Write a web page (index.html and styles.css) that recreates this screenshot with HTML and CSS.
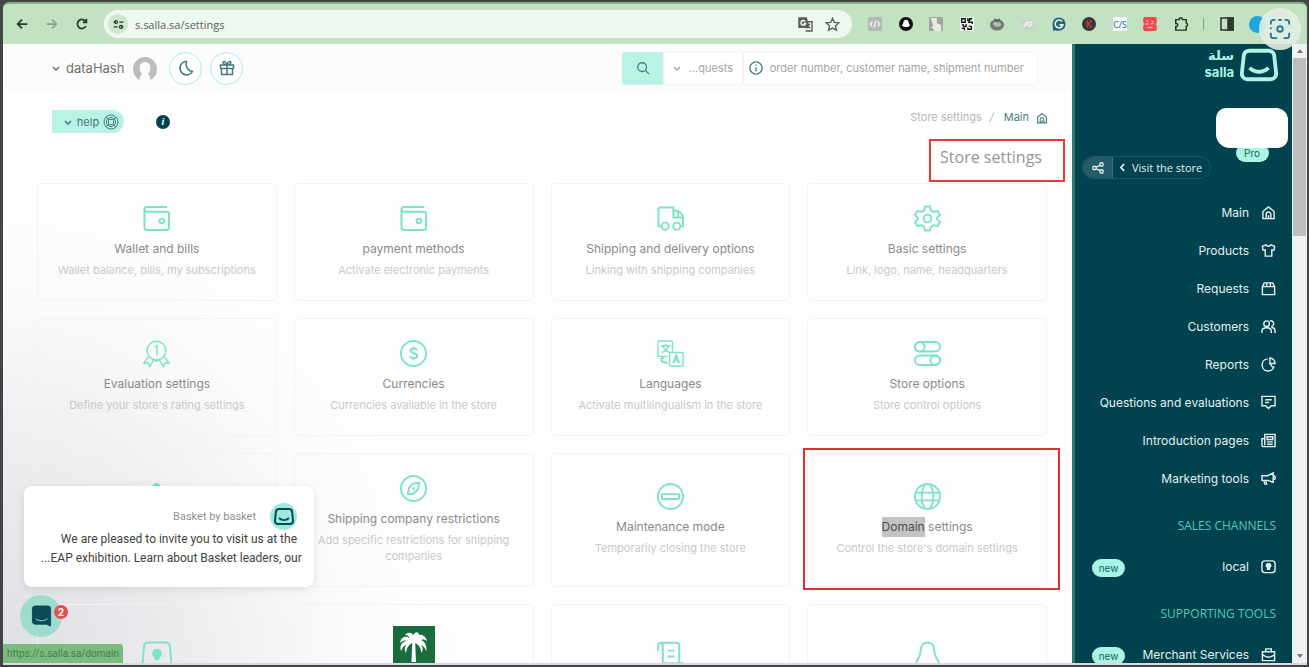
FILE: index.html
```html
<!DOCTYPE html>
<html lang="en">
<head>
    <meta charset="UTF-8">
    <meta name="viewport" content="width=device-width, initial-scale=1.0">
    <title>Store settings</title>
    <link rel="stylesheet" href="styles.css">
</head>
<body>
    <svg class="sprite" aria-hidden="true">
        <symbol id="chevron" viewBox="0 0 10 10"><path d="M2 4l3 3 3-3"/></symbol>
        <symbol id="house" viewBox="0 0 16 16"><path d="M2 7l6-5 6 5v7.500H2zM5.500 14.500V10a2.500 2.500 0 0 1 5 0v4.500M8 14.500V11"/></symbol>
        <symbol id="wallet" viewBox="0 0 28 28"><path d="M25 2H4a2.500 2.500 0 0 0-2.500 2.500V23a3 3 0 0 0 3 3H24a3 3 0 0 0 3-3V9a2 2 0 0 0-2-2H4a2.500 2.500 0 0 1-2.500-2.500"/><circle cx="19.500" cy="16.500" r="2.400"/></symbol>
        <symbol id="basket" viewBox="0 0 40 34"><path d="M10 2h20c4 0 5.500 2 6 5l2 18c.4 4-2 7-6 7H8c-4 0-6.400-3-6-7L4 7c.5-3 2-5 6-5z"/><path d="M10 20c6 5.500 14 5.500 20 0"/></symbol>
    </svg>
    <div class="browser">
        <button aria-label="Back"><svg viewBox="0 0 16 16"><path d="M14 8H3M8 3L3 8l5 5"/></svg></button>
        <button class="off" aria-label="Forward"><svg viewBox="0 0 16 16"><path d="M2 8h11M8 3l5 5-5 5"/></svg></button>
        <button aria-label="Reload"><svg viewBox="0 0 16 16"><path d="M12.500 10.500a5.200 5.200 0 1 1 0-5M13 2v4H9"/></svg></button>
        <div class="address">
            <span class="site-icon"><svg viewBox="0 0 16 16"><path d="M2 5h3M9 5h5M2 11h5M11 11h3"/><circle cx="5" cy="5" r="1.800"/><circle cx="11" cy="11" r="1.800"/></svg></span>
            <input type="text" aria-label="Address" value="s.salla.sa/settings">
            <svg viewBox="0 0 16 16"><path class="fill" d="M1 1h8l2 10H1z"/><path d="M7 5h8v10H8M9 8h4M11 7v1c0 2-1 3-2 4M10 9l3 3"/><path class="white" d="M7.500 4.500A2.500 2.500 0 1 0 8 7H6"/></svg>
            <svg viewBox="0 0 16 16"><path d="M8 1.500l2 4.300 4.700.5-3.500 3.200 1 4.600L8 11.800l-4.200 2.300 1-4.600L1.300 6.300 6 5.800z"/></svg>
        </div>
        <div class="extensions">
            <svg viewBox="0 0 16 16"><rect width="16" height="16" rx="2" fill="#b3b9b3"/><path d="M5 5L2.500 8 5 11M11 5l2.500 3-2.500 3M9 4l-2 8" stroke="#f1f5f1"/></svg>
            <svg viewBox="0 0 16 16"><circle cx="8" cy="8" r="8" fill="#111"/><path fill="#fff" d="M8 3c2 0 3 1.500 3 3.500L12.500 10 10 11.500H6L3.500 10 5 6.500C5 4.500 6 3 8 3z"/></svg>
            <svg viewBox="0 0 16 16"><rect width="16" height="16" rx="1" fill="#9ea69e"/><path fill="#e4e9e4" d="M2 1h7v6l5 2v7H6l-3-5 2-1z"/></svg>
            <svg viewBox="0 0 16 16"><rect width="16" height="16" fill="#eef5ee"/><path d="M2 2h4v4H2zM9 1v3h2V2h3M9 6h5v2M2 9h2v2h3V8M10 10l3 1v3H9v-2M2 13h3v2" stroke="#111"/></svg>
            <svg viewBox="0 0 16 16"><ellipse cx="8" cy="9" rx="8" ry="6.500" fill="#747b74"/><path fill="#b4bab4" d="M3 7c3-2 8-2 10 1-1 4-7 5-10-1z"/><path d="M5 2l3 3 3-3" stroke="#566056"/></svg>
            <svg viewBox="0 0 16 16"><rect y="3" width="16" height="11" rx="3" fill="#ccd3cc"/><path d="M3 12l4-7M7 10l2-4c3-2 5 1 2 4H9" stroke="#f5f8f5"/></svg>
            <svg viewBox="0 0 16 16"><circle cx="8" cy="8" r="7.500" fill="#27637c"/><path fill="#27637c" d="M1 8h7v7.500H1z"/><path d="M11.500 5A4.500 4.500 0 1 0 12.500 9H8.500" stroke="#e9f7ee" stroke-width="1.800"/></svg>
            <svg viewBox="0 0 16 16"><circle cx="8" cy="8" r="8" fill="#32383c"/><path d="M6 4v8M11 4L7 8l4 4" stroke="#c4383d" stroke-width="2"/></svg>
            <svg viewBox="0 0 16 16"><rect width="16" height="16" fill="#eff7fa"/><text x="8" y="12" text-anchor="middle">C/S</text></svg>
            <svg viewBox="0 0 16 16"><path fill="#ef4a4d" d="M1 0h14l1 4-1 4 1 4-1 4H1l-1-4 1-4-1-4z"/><path d="M4 4l2 1M10 4l2 2M3 8h3M9 8l3-1M5 12h6" stroke="#fab0ab"/></svg>
            <svg viewBox="0 0 16 16"><path d="M2 3h4c-.5-3 4-3 3.500 0H14v4c2 0 2 3.500 0 3.500V15H2v-4c3 .5 3-4 0-3.500z" stroke="#26341f" stroke-width="1.700"/></svg>
        </div>
        <span class="line"></span>
        <svg class="panel" viewBox="0 0 16 16"><rect x="2" y="2" width="12" height="12"/><path class="fill" d="M9 2h5v12H9z"/></svg>
        <span class="profile"></span>
        <button class="lens" aria-label="Capture"><svg viewBox="0 0 24 24"><path d="M2 7V5a3 3 0 0 1 3-3h2M10 2h4M17 2h2a3 3 0 0 1 3 3v2M22 16v3a3 3 0 0 1-3 3h-3M9 22H5a3 3 0 0 1-3-3v-3M2 10v2"/><circle cx="12" cy="12" r="3"/></svg></button>
    </div>

    <div class="page">
        <main>
            <header>
                <button class="user"><svg><use href="#chevron"/></svg>dataHash
                    <svg class="avatar" viewBox="0 0 24 24"><path d="M7 24c-1-3 1-5 2-6C5 14 6 6 12 6s7 8 3 12c1 1 3 3 2 6a12 12 0 1 0-10 0z"/></svg>
                </button>
                <button class="round" aria-label="Dark mode"><svg viewBox="0 0 16 16"><path d="M8.500 1.500a6.700 6.700 0 1 0 6 10A7.500 7.500 0 0 1 8.500 1.500z"/></svg></button>
                <button class="round" aria-label="Gifts"><svg viewBox="0 0 16 16"><path d="M1.500 5h13v3.500h-13zM2.500 8.500V14.500h11V8.500M8 5v9.500M8 5C4 5 3 1 5.500 1.500 7 1.800 8 5 8 5s1-3.200 2.500-3.500C13 1 12 5 8 5z"/></svg></button>
                <form class="search">
                    <button aria-label="Search"><svg viewBox="0 0 16 16"><circle cx="7" cy="7" r="5"/><path d="M11 11l4 4"/></svg></button>
                    <div class="kind">
                        <svg><use href="#chevron"/></svg>
                        <select aria-label="Search in"><option>...quests</option></select>
                    </div>
                    <div class="query">
                        <svg viewBox="0 0 16 16"><circle cx="8" cy="8" r="7"/><path d="M8 7v5M8 4v1.500"/></svg>
                        <input type="text" aria-label="Search text" placeholder="order number, customer name, shipment number">
                    </div>
                </form>
            </header>

            <div class="tools">
                <button class="help"><svg class="small"><use href="#chevron"/></svg>help
                    <svg viewBox="0 0 16 16"><circle cx="8" cy="8" r="7"/><circle cx="8" cy="8" r="4.500"/><rect x="5.500" y="5.500" width="5" height="5" rx="1"/><path d="M3 3l2.500 2.500M13 3l-2.500 2.500M3 13l2.500-2.500M13 13l-2.500-2.500"/></svg>
                </button>
                <span class="info">i</span>
                <nav class="crumbs">
                    <span>Store settings</span><i>/</i><a href="#">Main<svg><use href="#house"/></svg></a>
                </nav>
            </div>

            <h1>Store settings</h1>

            <div class="cards">
                <a class="card" href="#">
                    <svg><use href="#wallet"/></svg>
                    <h2>Wallet and bills</h2>
                    <p>Wallet balance, bills, my subscriptions</p>
                </a>
                <a class="card" href="#">
                    <svg><use href="#wallet"/></svg>
                    <h2>payment methods</h2>
                    <p>Activate electronic payments</p>
                </a>
                <a class="card" href="#">
                    <svg viewBox="0 0 28 28"><path d="M4 22H1.500V4a1.500 1.500 0 0 1 1.500-1.500h14V13h10M17 6h3c4 0 7 4 7 8v8h-2M22 6v7"/><circle cx="8.500" cy="22" r="3.700"/><circle cx="20.500" cy="22" r="3.700"/></svg>
                    <h2>Shipping and delivery options</h2>
                    <p>Linking with shipping companies</p>
                </a>
                <a class="card" href="#">
                    <svg viewBox="0 0 28 28"><path d="M11.500 1.500h5l1 4 3 1.700 4-1.200 2.500 4.300-3 2.900v1.600l3 2.900-2.500 4.300-4-1.200-3 1.700-1 4h-5l-1-4-3-1.700-4 1.200L1 17.700l3-2.900v-1.600l-3-2.900L3.500 6l4 1.200 3-1.700z"/><circle cx="14" cy="14" r="4"/></svg>
                    <h2>Basic settings</h2>
                    <p>Link, logo, name, headquarters</p>
                </a>

                <a class="card" href="#">
                    <svg class="thin" viewBox="0 0 28 28"><circle cx="14" cy="11" r="9.700"/><path d="M12 7.500l2.500-1.500v10M6 17l-5 7 4-.5 2 4 4-7M22 17l5 7-4-.5-2 4-4-7M11 20l3 2 3-2"/></svg>
                    <h2>Evaluation settings</h2>
                    <p>Define your store's rating settings</p>
                </a>
                <a class="card" href="#">
                    <svg viewBox="0 0 28 28"><circle cx="14" cy="14" r="13"/><path d="M18 10.500c-1-2-7-2.500-7 .5s7 2.500 7 5.500-6 3-8 .500M14 7v2M14 19v2"/></svg>
                    <h2>Currencies</h2>
                    <p>Currencies available in the store</p>
                </a>
                <a class="card" href="#">
                    <svg class="thin" viewBox="0 0 28 28"><path d="M16 12V2a1 1 0 0 0-1-1H2a1 1 0 0 0-1 1v14a1 1 0 0 0 1 1h9M4 6h10M9 4v2M12 6c-1 4-4 6-7 7M6 6c1 3 4 6 7 7"/><rect x="13" y="13" width="14" height="14" rx="1"/><path stroke-width="2.200" d="M17 24l3-8 3 8M18 21h4M5 19v3l6 2M4 20l3-2"/></svg>
                    <h2>Languages</h2>
                    <p>Activate multilingualism in the store</p>
                </a>
                <a class="card" href="#">
                    <svg viewBox="0 0 28 28"><rect x="1" y="2" width="26" height="10" rx="5"/><rect x="1" y="16" width="26" height="10" rx="5"/><circle cx="6" cy="7" r="5"/><circle cx="22" cy="21" r="5"/></svg>
                    <h2>Store options</h2>
                    <p>Store control options</p>
                </a>

                <a class="card icon-only" href="#">
                    <svg viewBox="0 0 28 28"><circle class="fill" cx="14" cy="4" r="3"/><path d="M5 14h18v12H5z"/></svg>
                </a>
                <a class="card" href="#">
                    <svg viewBox="0 0 28 28"><circle cx="14" cy="14" r="13"/><path d="M20 8l-1.500 7L14 19.500 8 20l1.500-7L13 9z"/><circle cx="14" cy="14" r=".6"/></svg>
                    <h2>Shipping company restrictions</h2>
                    <p>Add specific restrictions for shipping companies</p>
                </a>
                <a class="card" href="#">
                    <svg viewBox="0 0 28 28"><circle cx="14" cy="14" r="13"/><rect x="5" y="11.500" width="18" height="5" rx="1"/></svg>
                    <h2>Maintenance mode</h2>
                    <p>Temporarily closing the store</p>
                </a>
                <a class="card marked" href="#">
                    <svg viewBox="0 0 28 28"><circle cx="14" cy="14" r="13"/><path d="M2 10h24M2 18h24M11 1.500c-4 8-4 17 0 25M17 1.500c4 8 4 17 0 25"/></svg>
                    <h2><mark>Domain</mark> settings</h2>
                    <p>Control the store's domain settings</p>
                </a>

                <a class="card icon-only" href="#">
                    <svg class="wide" viewBox="0 0 32 28"><path d="M7 1.500h18c3 0 4 1 4.500 4L31 24c0 3-1 4-4 4H5c-3 0-4-1-4-4L2.500 5.500c.5-3 1.500-4 4.500-4z"/><path class="fill" d="M16 9c3 0 4 2 4 4 0 3-2.500 3-3 6h-2c-.5-3-3-3-3-6 0-2 1-4 4-4z"/></svg>
                </a>
                <a class="card season" href="#">
                    <svg class="palm" viewBox="0 0 42 42"><path fill="#1a6b3e" stroke="none" d="M0 0h42v42H0z"/><path fill="#fff" stroke="none" d="M18.500 36l.7-19c-4 2-6 6-6 10-2-2-2-5 0-8-3 1-4 3-5 6-2-4 0-9 5-10-2-1-4 0-6 2 0-5 5-8 9-5 0-2-2-3-4-3 2-3 6-3 8 0 1-2 3-3 4-3 0 1 1 1 1 1l1 2c3-1 6 1 8 6-2-1-4-2-6-1 4 2 6 6 5 11-1-3-3-5-5-6 2 3 2 6 0 8 0-4-2-8-6-10l.8 19z"/></svg>
                </a>
                <a class="card icon-only" href="#">
                    <svg viewBox="0 0 28 28"><path d="M1 10V5c0-4 5-4 5 0v18M4 1.800h16c2 0 3 1 3 3V22M5 23h23M11 10h7M11 16h7"/></svg>
                </a>
                <a class="card icon-only" href="#">
                    <svg viewBox="0 0 28 28"><path d="M14 1.500c5 0 7 4 7 8 0 8 5 10 5 15H2c0-5 5-7 5-15 0-4 2-8 7-8zM11 25c0 3 6 3 6 0"/></svg>
                </a>
            </div>

            <div class="chat">
                <div class="chat-head">
                    <span>Basket by basket</span>
                    <span class="basket"><svg><use href="#basket"/></svg></span>
                </div>
                <p>We are pleased to invite you to visit us at the<br>...EAP exhibition. Learn about Basket leaders, our</p>
            </div>
            <button class="launcher" aria-label="Open chat">
                <svg viewBox="0 0 20 22"><path class="fill" d="M3 0h14a3 3 0 0 1 3 3v19l-5-2H3a3 3 0 0 1-3-3V3a3 3 0 0 1 3-3z"/><path d="M3.500 14c4 3 9 3 13 0" stroke="#a4e6da"/></svg>
                <b>2</b>
            </button>
            <div class="link-preview">https://s.salla.sa/domain</div>
        </main>

        <aside>
            <div class="logo">
                <div><span lang="ar">سلة</span><span>salla</span></div>
                <svg><use href="#basket"/></svg>
            </div>
            <div class="store">
                <div class="visit">
                    <button aria-label="Share"><svg viewBox="0 0 16 16"><circle cx="4" cy="8" r="2"/><circle cx="12" cy="4" r="2"/><circle cx="12" cy="12" r="2"/><path d="M6 7l4-2M6 9l4 2"/></svg></button>
                    <a href="#"><svg viewBox="0 0 10 10"><path d="M6.500 2L3.500 5l3 3"/></svg>Visit the store</a>
                </div>
                <div class="plan">
                    <span class="name"></span>
                    <span class="badge">Pro</span>
                </div>
            </div>
            <ul>
                <li><a href="#">Main<svg><use href="#house"/></svg></a></li>
                <li><a href="#">Products<svg viewBox="0 0 16 16"><path d="M5.500 2L1.500 3.500 2 7.500h2.500V14h7V7.500H14l.5-4L10.500 2c-1 2-4 2-5 0z"/></svg></a></li>
                <li><a href="#">Requests<svg viewBox="0 0 16 16"><path d="M1.500 6l2-4h9l2 4v8.500h-13zM1.500 6h13M6 6V2M10 6V2"/></svg></a></li>
                <li><a href="#">Customers<svg viewBox="0 0 16 16"><circle cx="6" cy="5" r="3"/><path d="M1 15v-2c0-5 10-5 10 0v2M9.500 2c5-1 5 6 1.500 6M11 9c3 0 4 2 4 4v2"/></svg></a></li>
                <li><a href="#">Reports<svg viewBox="0 0 16 16"><path d="M7 2a6.500 6.500 0 1 0 7 8M9.500 1v6h5.500a6 6 0 0 0-5.500-6zM9.500 7l3 4"/></svg></a></li>
                <li><a href="#">Questions and evaluations<svg viewBox="0 0 16 16"><path d="M1 1.500h14v10h-4l-3 3-3-3H1zM4.500 5h7M4.500 8h4"/></svg></a></li>
                <li><a href="#">Introduction pages<svg viewBox="0 0 16 16"><path d="M4 1.500h11v13H3c-2 0-2-2-2-2V6h3zM4 4v9M6.500 4h6v3h-6zM6.500 9.500h6M6.500 12h6"/></svg></a></li>
                <li><a href="#">Marketing tools<svg viewBox="0 0 16 16"><path d="M1 5h6l6-3v10L7 10H1zM3 10l1 4h2l-1-4M13 5c3 0 3 4 0 4"/></svg></a></li>
            </ul>
            <h3>SALES CHANNELS</h3>
            <ul>
                <li><span class="badge">new</span><a href="#">local<svg viewBox="0 0 16 16"><rect x="1" y="2" width="14" height="12.500" rx="3"/><path class="fill" d="M8 5c3 0 3 3 1 4v2H7V9C5 8 5 5 8 5z"/></svg></a></li>
            </ul>
            <h3>SUPPORTING TOOLS</h3>
            <ul>
                <li><span class="badge">new</span><a href="#">Merchant Services<svg viewBox="0 0 16 16"><path d="M1.500 5h13v9.500h-13zM5 5V2h6v3M1.500 8c4 3.500 9 3.500 13 0"/></svg></a></li>
            </ul>
        </aside>
        <div class="scrollbar"><i></i><span></span><i class="down"></i></div>
    </div>
</body>
</html>
```
FILE: styles.css
```css
*{
    box-sizing: border-box;
    margin: 0;
    padding: 0;
}
body{
    display: flex;
    flex-direction: column;
    height: 100vh;
    padding: 2px 2px 2px 3px;
    overflow: hidden;
    background-color: #434447;
    font-family: Inter, "DejaVu Sans", sans-serif;
    font-size: 12px;
    color: #8a8a8a;
}
button, input, select{
    border: none;
    background: none;
    font: inherit;
    color: inherit;
    outline: none;
}
button{
    display: flex;
    align-items: center;
    justify-content: center;
    cursor: pointer;
}
a{
    color: inherit;
    text-decoration: none;
}
ul{
    list-style: none;
}
svg{
    flex: none;
    width: 16px;
    height: 16px;
    fill: none;
    stroke: currentColor;
    stroke-width: 1.5;
    overflow: visible;
}
.fill{
    fill: currentColor;
}
.sprite{
    position: absolute;
    width: 0;
    height: 0;
}

/* browser bar */
.browser{
    position: relative;
    display: flex;
    align-items: center;
    flex: none;
    height: 42px;
    padding: 0 41px 0 11px;
    border-top: 2px solid #80b582;
    border-radius: 6px 6px 0 0;
    background-color: #c2e2c2;
    color: #2c382c;
    font-family: "Open Sans", sans-serif;
}
.browser > button:not(.lens){
    width: 16px;
    margin-right: 14px;
}
.browser > button svg{
    width: 14px;
    height: 14px;
    stroke-width: 2;
}
.browser .off{
    color: #8ba18b;
}
.address{
    display: flex;
    align-items: center;
    gap: 12px;
    flex: 1;
    height: 28px;
    padding: 0 12px 0 4px;
    margin-right: 16px;
    border-radius: 14px;
    background-color: #eff8ef;
    color: #596159;
}
.address input{
    flex: 1;
    min-width: 0;
    margin-left: -5px;
    font-size: 11px;
}
.address svg{
    width: 15px;
    height: 15px;
}
.address .white{
    stroke: white;
}
.site-icon{
    display: flex;
    align-items: center;
    justify-content: center;
    width: 20px;
    height: 20px;
    border-radius: 50%;
    background-color: #cfe7cf;
    color: #2c382c;
}
.site-icon svg{
    width: 13px;
    height: 13px;
}
.extensions{
    display: flex;
    justify-content: space-between;
    flex: 0 1 320px;
}
.extensions svg{
    width: 14px;
    height: 14px;
    stroke: none;
}
.extensions text{
    fill: #27637c;
    font-size: 10px;
}
.line{
    width: 1px;
    height: 12px;
    margin: 0 15px;
    background-color: #7fa67f;
}
.panel{
    margin-right: 14px;
}
.profile{
    width: 17px;
    height: 17px;
    border-radius: 50%;
    background-color: #1ea7df;
}
.lens{
    position: absolute;
    top: 4px;
    right: 6px;
    z-index: 2;
    width: 42px;
    height: 42px;
    border-radius: 50%;
    background-color: rgba(226, 238, 228, 0.9);
    color: #25719b;
}
.browser .lens svg{
    width: 22px;
    height: 22px;
}

.page{
    display: flex;
    flex: 1;
    min-height: 0;
    border-bottom: 2px solid #d9dadb;
    background-color: #fefefe;
}
main{
    position: relative;
    flex: 1;
    min-width: 0;
    overflow: hidden;
    background-image: radial-gradient(ellipse 440px 480px at 0 100%, #dedfe2, #ebecee 40%, #fafafb 75%, #fefefe);
}
header{
    display: flex;
    align-items: center;
    gap: 8px;
    height: 48px;
    padding: 0 34px 0 48px;
    background-color: #fcfcfc;
    color: #427a7e;
}
.user{
    gap: 5px;
    margin-right: 4px;
    font-size: 13px;
    color: #707070;
}
.user svg{
    width: 10px;
    height: 10px;
}
.user .avatar{
    width: 24px;
    height: 24px;
    margin-left: 4px;
    fill: #bcbcbc;
    stroke: none;
}
.round{
    width: 33px;
    height: 33px;
    border: 1px solid #abebdc;
    border-radius: 50%;
    background-color: white;
}
.search{
    display: flex;
    height: 33px;
    margin-left: auto;
    font-size: 11px;
}
.search button{
    width: 41px;
    border-radius: 3px 0 0 3px;
    background-color: #b9f3e5;
}
.search svg{
    width: 14px;
    height: 14px;
}
.kind, .query{
    display: flex;
    align-items: center;
    background-color: white;
    border: 1px solid #f4f4f4;
}
.kind{
    width: 80px;
    padding: 0 9px 0 8px;
    color: #a5a5a5;
}
.kind svg{
    width: 10px;
    height: 10px;
}
.kind select{
    flex: 1;
    min-width: 0;
    appearance: none;
    text-align: right;
}
.query{
    position: relative;
    width: 295px;
    border-radius: 0 3px 3px 0;
}
.query svg{
    position: absolute;
    left: 5px;
}
.query input{
    width: 100%;
    padding: 0 13px 0 8px;
    text-align: right;
}
.query input::placeholder{
    color: #a5a5a5;
}

.tools{
    display: flex;
    align-items: center;
    padding: 18px 24px 0 49px;
}
.help{
    gap: 4px;
    width: 72px;
    height: 23px;
    padding-left: 6px;
    border-radius: 0 12px 12px 0;
    background-color: #b9f3e5;
    color: #42787a;
    font-size: 11px;
}
.help svg{
    stroke-width: 1;
}
.help .small{
    width: 10px;
    height: 10px;
    stroke-width: 1.5;
}
.info{
    width: 14px;
    height: 14px;
    margin-left: 32px;
    border-radius: 50%;
    background-color: #00424d;
    color: white;
    font: italic bold 10px/14px "Liberation Serif", serif;
    text-align: center;
}
.crumbs{
    display: flex;
    align-items: center;
    gap: 8px;
    margin: 0 0 8px auto;
    font-size: 11px;
    line-height: 15px;
    color: #b5b5b5;
}
.crumbs a{
    display: flex;
    align-items: center;
    gap: 7px;
    padding-left: 2px;
    color: #4b7d80;
}
.crumbs svg{
    width: 12px;
    height: 12px;
}
h1{
    width: fit-content;
    margin: 6px 7px 1px auto;
    padding: 5px 21px 12px 9px;
    border: 2px solid #e83a3a;
    font-family: "Open Sans", sans-serif;
    font-size: 16px;
    font-weight: normal;
    line-height: 22px;
    color: #969696;
}
.cards{
    display: grid;
    grid-template-columns: repeat(4, 1fr);
    gap: 17px;
    padding: 0 25px 0 34px;
}
.card{
    position: relative;
    display: flex;
    flex-direction: column;
    align-items: center;
    justify-content: center;
    padding: 21px 21px 22px;
    border: 1px solid #f1f2f2;
    border-radius: 5px;
    text-align: center;
}
.card svg{
    width: 27px;
    height: 27px;
    color: #7de3c6;
    stroke-width: 2;
}
.card .thin{
    stroke-width: 1.5;
}
.card .wide{
    width: 32px;
}
.card .palm{
    width: 42px;
    height: 42px;
}
.icon-only{
    padding-bottom: 68px;
}
.season{
    min-height: 148px;
    justify-content: flex-start;
}
.card h2{
    margin: 7px 0 3px;
    font-size: 12px;
    font-weight: normal;
    line-height: 20px;
    color: #8a8a8a;
}
.card p{
    margin: 0 -5px;
    font-size: 11px;
    line-height: 16px;
    color: #c9c9c9;
}
mark{
    display: inline-block;
    background-color: #c3c3c3;
    color: #4b4b4b;
}
.marked::after{
    content: "";
    position: absolute;
    inset: -6px -14px -4px -5px;
    border: 2px solid #e0302f;
}

.chat{
    position: absolute;
    left: 21px;
    bottom: 76px;
    width: 290px;
    padding: 17px 17px 19px;
    border-radius: 8px;
    background-color: white;
    box-shadow: 0 2px 8px rgba(0, 0, 0, 0.1);
    font-family: Roboto, sans-serif;
    text-align: right;
    white-space: nowrap;
    color: #414141;
}
.chat p{
    line-height: 19px;
}
.chat-head{
    display: flex;
    align-items: center;
    justify-content: flex-end;
    gap: 14px;
    font-size: 11px;
    color: #919191;
}
.basket{
    display: flex;
    align-items: center;
    justify-content: center;
    width: 27px;
    height: 27px;
    border-radius: 50%;
    background-color: #9fe9dc;
    color: #0b4a57;
}
.basket svg{
    width: 20px;
    height: 17px;
    stroke-width: 4;
}
.launcher{
    position: absolute;
    left: 17px;
    bottom: 26px;
    width: 42px;
    height: 42px;
    border-radius: 50%;
    background-color: #9fdcd0;
    color: #0b4a57;
}
.launcher svg{
    width: 19px;
    height: 20px;
    stroke-width: 1;
}
.launcher b{
    position: absolute;
    top: 10px;
    right: -6px;
    width: 14px;
    height: 14px;
    border-radius: 50%;
    background-color: #ec4b4b;
    color: white;
    font-size: 10px;
    line-height: 14px;
}
.link-preview{
    position: absolute;
    left: 0;
    bottom: 0;
    width: 120px;
    padding: 0 4px;
    border-radius: 0 3px 0 0;
    background-color: #7abc7c;
    color: #477a53;
    font-family: Roboto, sans-serif;
    font-size: 10px;
    line-height: 19px;
    white-space: nowrap;
}

/* sidebar */
aside{
    position: relative;
    flex: none;
    width: 220px;
    overflow: hidden;
    padding: 0 16px 0 20px;
    border-left: 3px solid #2c7c76;
    background-color: #00424d;
    color: #e6f0f1;
}
aside::before{
    content: "";
    position: absolute;
    top: 43px;
    left: -3px;
    width: 3px;
    height: 302px;
    background-color: #79797b;
}
.logo{
    display: flex;
    justify-content: flex-end;
    gap: 6px;
    height: 34px;
    margin: 4px -2px 26px 0;
    color: #aff3e5;
}
.logo div{
    display: flex;
    flex-direction: column;
    font-size: 13px;
    font-weight: bold;
    line-height: 16px;
    text-align: right;
}
.logo span:first-child{
    font-family: "DejaVu Sans", sans-serif;
}
.logo svg{
    width: 38px;
    height: 34px;
    stroke-width: 4;
}
.store{
    display: flex;
    align-items: flex-end;
    justify-content: space-between;
    height: 71px;
    margin: 0 -12px 14px -13px;
}
.visit{
    display: flex;
    height: 23px;
    border: 1px solid #1c5a63;
    border-radius: 12px;
    overflow: hidden;
    font-family: "Open Sans", sans-serif;
    font-size: 11px;
}
.visit button{
    width: 30px;
    border-right: 1px solid #3b717a;
    background-color: #245b66;
}
.visit svg{
    width: 14px;
    height: 14px;
    stroke-width: 1.5;
}
.visit a{
    display: flex;
    align-items: center;
    gap: 4px;
    padding: 0 8px 0 4px;
}
.visit a svg{
    width: 11px;
    height: 11px;
}
.plan{
    align-self: flex-start;
    display: flex;
    flex-direction: column;
    align-items: center;
}
.name{
    z-index: 1;
    width: 72px;
    height: 40px;
    border-radius: 10px 12px 10px 14px;
    background-color: white;
}
.badge{
    min-width: 33px;
    padding: 0 6px;
    border-radius: 9px;
    background-color: #a9f5e3;
    color: #1f5d66;
    font-size: 10px;
    line-height: 18px;
    text-align: center;
}
.plan .badge{
    margin-top: -4px;
}
aside ul{
    font-size: 12px;
}
li{
    display: flex;
    align-items: center;
    justify-content: flex-end;
    height: 38px;
}
li .badge{
    margin: 3px auto 0 -3px;
}
li a{
    display: flex;
    align-items: center;
    gap: 12px;
}
li svg{
    width: 15px;
    height: 15px;
}
h3{
    margin: 19px 0 11px;
    font-family: "Open Sans", sans-serif;
    font-size: 12px;
    font-weight: normal;
    line-height: 20px;
    text-align: right;
    color: #55c8b8;
}
.scrollbar{
    display: flex;
    flex-direction: column;
    align-items: center;
    flex: none;
    width: 15px;
    padding: 5px 1px;
    background-color: #f0f1f1;
}
.scrollbar i{
    border: 3px solid transparent;
    border-top: none;
    border-bottom: 4px solid #77777a;
}
.scrollbar span{
    width: 100%;
    height: 178px;
    margin: 5px 0 auto;
    background-color: #bdbdbd;
}
.scrollbar .down{
    border-top: 4px solid #77777a;
    border-bottom: none;
}
```
